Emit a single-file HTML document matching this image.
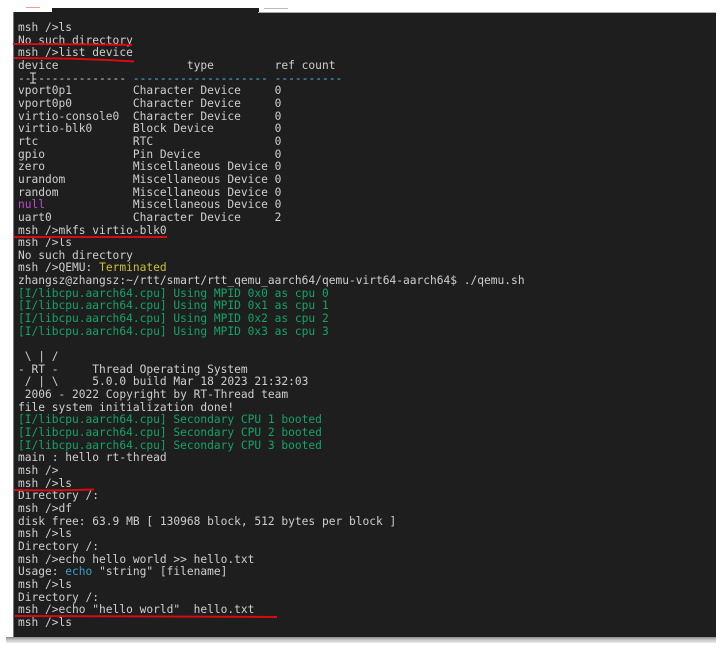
<!DOCTYPE html>
<html>
<head>
<meta charset="utf-8">
<style>
html,body{margin:0;padding:0;background:#fff;width:726px;height:651px;overflow:hidden}
#root{position:relative;width:726px;height:651px;overflow:hidden}
.term{position:absolute;left:13px;top:12px;width:703px;height:625px;background:#1e1e1e;border-left:1px solid #777;box-sizing:border-box}
.topdark{position:absolute;left:52px;top:8px;width:207px;height:5px;background:#1e1e1e}
.topline{position:absolute;left:258px;top:12px;width:458px;height:1px;background:#aaa}
.shadow{position:absolute;left:6px;top:637px;width:710px;height:6px;background:linear-gradient(#8a8a8a,#c8c8c8 50%,#ececec)}
pre{position:absolute;left:18px;top:22px;margin:0;font-family:"DejaVu Sans Mono","Liberation Mono",monospace;font-size:11.22px;line-height:12.66px;color:#cfcfcf;filter:blur(.25px)}
.g{color:#13a467}.b{color:#3b9fc4}.y{color:#c9c23a}.p{color:#b84cd0}.c{color:#4fc0f0}
</style>
</head>
<body>
<div id="root">
<div class="term"></div>
<div class="topdark"></div>
<div class="topline"></div>
<div style="position:absolute;left:26px;top:7px;width:14px;height:2px;background:#e4a090"></div>
<div style="position:absolute;left:264px;top:8px;width:24px;height:1px;background:#bbb"></div>
<div style="position:absolute;left:13px;top:8px;width:39px;height:4px;background:#fff"></div>
<div class="shadow"></div>
<pre>msh />ls
No such directory
msh />list device
device                   type         ref count
---------------- <span class="c">-------------------- ----------</span>
vport0p1         Character Device     0
vport0p0         Character Device     0
virtio-console0  Character Device     0
virtio-blk0      Block Device         0
rtc              RTC                  0
gpio             Pin Device           0
zero             Miscellaneous Device 0
urandom          Miscellaneous Device 0
random           Miscellaneous Device 0
<span class="p">null</span>             Miscellaneous Device 0
uart0            Character Device     2
msh />mkfs virtio-blk0
msh />ls
No such directory
msh />QEMU: <span class="y">Terminated</span>
zhangsz@zhangsz:~/rtt/smart/rtt_qemu_aarch64/qemu-virt64-aarch64$ ./qemu.sh
<span class="g">[I/libcpu.aarch64.cpu] Using MPID 0x0 as cpu 0
[I/libcpu.aarch64.cpu] Using MPID 0x1 as cpu 1
[I/libcpu.aarch64.cpu] Using MPID 0x2 as cpu 2
[I/libcpu.aarch64.cpu] Using MPID 0x3 as cpu 3</span>

 \ | /
- RT -     Thread Operating System
 / | \     5.0.0 build Mar 18 2023 21:32:03
 2006 - 2022 Copyright by RT-Thread team
file system initialization done!
<span class="g">[I/libcpu.aarch64.cpu] Secondary CPU 1 booted
[I/libcpu.aarch64.cpu] Secondary CPU 2 booted
[I/libcpu.aarch64.cpu] Secondary CPU 3 booted</span>
main : hello rt-thread
msh />
msh />ls
Directory /:
msh />df
disk free: 63.9 MB [ 130968 block, 512 bytes per block ]
msh />ls
Directory /:
msh />echo hello world >> hello.txt
Usage: <span class="b">echo</span> "string" [filename]
msh />ls
Directory /:
msh />echo "hello world"  hello.txt
msh />ls</pre>
<svg style="position:absolute;left:0;top:0" width="726" height="651">
<path d="M13 44 Q70 44 132 45" stroke="#d80a12" stroke-width="2" fill="none"/>
<path d="M14 58 Q80 58 134 61.5" stroke="#d80a12" stroke-width="2" fill="none"/>
<path d="M14 237 Q90 237 167 237" stroke="#d80a12" stroke-width="2" fill="none"/>
<path d="M14 490 Q50 491 94 489.5" stroke="#d80a12" stroke-width="2" fill="none"/>
<path d="M15 616 Q140 617 277 617" stroke="#d80a12" stroke-width="2" fill="none"/>
<line x1="30" y1="73" x2="36" y2="73" stroke="#ddd" stroke-width="1"/>
<line x1="33" y1="73" x2="33" y2="83" stroke="#ddd" stroke-width="1"/>
<line x1="30" y1="83" x2="36" y2="83" stroke="#ddd" stroke-width="1"/>
</svg>
</div>
</body>
</html>
